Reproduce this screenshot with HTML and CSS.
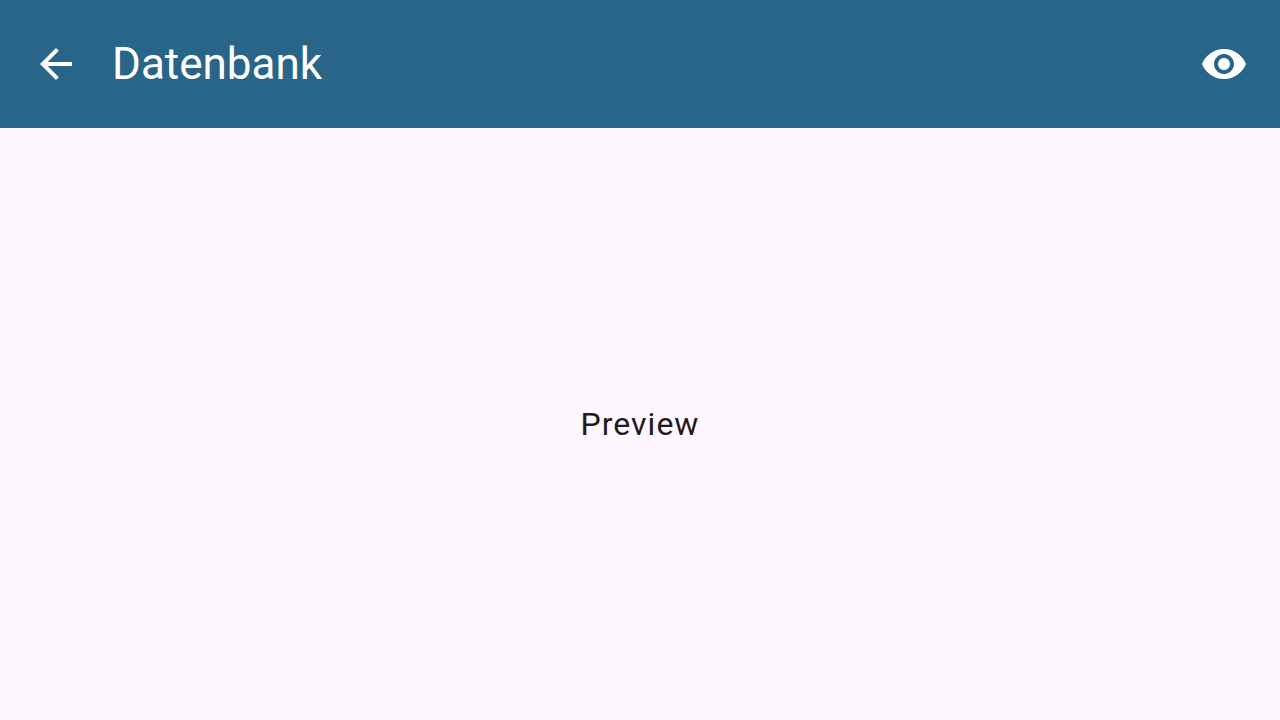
FILE: index.html
```html
<!DOCTYPE html>
<html lang="de">
<head>
<meta charset="utf-8">
<meta name="viewport" content="width=device-width, initial-scale=1">
<title>Datenbank</title>
<link rel="stylesheet" href="styles.css">
</head>
<body>
<header class="app-bar">
  <button class="icon-button" type="button" aria-label="Zurück">
    <svg class="icon" viewBox="0 0 24 24" aria-hidden="true"><path d="M20 11H7.83l5.59-5.59L12 4l-8 8 8 8 1.41-1.41L7.83 13H20v-2z"/></svg>
  </button>
  <h1 class="title">Datenbank</h1>
  <button class="icon-button" type="button" aria-label="Vorschau">
    <svg class="icon" viewBox="0 0 24 24" aria-hidden="true"><path d="M12 4.5C7 4.5 2.73 7.61 1 12c1.73 4.39 6 7.5 11 7.5s9.27-3.11 11-7.5c-1.73-4.39-6-7.5-11-7.5zM12 17c-2.76 0-5-2.24-5-5s2.24-5 5-5 5 2.24 5 5-2.24 5-5 5zm0-8c-1.66 0-3 1.34-3 3s1.34 3 3 3 3-1.34 3-3-1.34-3-3-3z"/></svg>
  </button>
</header>
<main class="content">
  <p class="message">Preview</p>
</main>
</body>
</html>
```
FILE: styles.css
```css
* {
  box-sizing: border-box;
}

body {
  margin: 0;
  min-height: 100vh;
  display: flex;
  flex-direction: column;
  background: #fef7ff;
  color: #1d1b20;
  font-family: Roboto, "Liberation Sans", sans-serif;
}

.app-bar {
  display: flex;
  align-items: center;
  padding: 16px 8px;
  background: #296588;
  color: #fff;
}

.icon-button {
  display: flex;
  padding: 24px;
  border: 0;
  border-radius: 50%;
  background: none;
  color: inherit;
  cursor: pointer;
}

.icon {
  width: 48px;
  height: 48px;
  fill: currentColor;
}

.title {
  flex: 1;
  margin: 0 0 0 8px;
  font-size: 44px;
  font-weight: 400;
  line-height: 56px;
}

.content {
  flex: 1;
  display: flex;
  align-items: center;
  justify-content: center;
}

.message {
  margin: 0;
  font-size: 32px;
  line-height: 48px;
  letter-spacing: 1px;
}
```
